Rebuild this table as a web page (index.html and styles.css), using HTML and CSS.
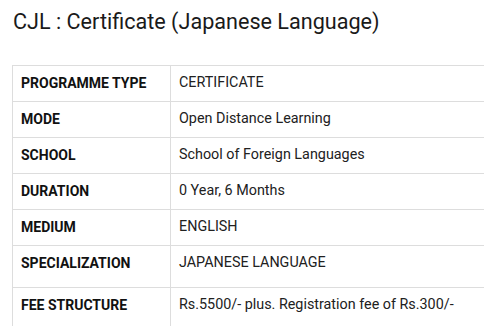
FILE: index.html
```html
<!DOCTYPE html>
<html>
<head>
<meta charset="utf-8">
<link rel="stylesheet" href="styles.css">
</head>
<body>
<div class="page">
  <h1 class="title">CJL : Certificate (Japanese Language)</h1>
  <div class="table-wrap">
    <table class="info">
      <tr><th>PROGRAMME TYPE</th><td>CERTIFICATE</td></tr>
      <tr><th>MODE</th><td>Open Distance Learning</td></tr>
      <tr><th>SCHOOL</th><td>School of Foreign Languages</td></tr>
      <tr><th>DURATION</th><td>0 Year, 6 Months</td></tr>
      <tr><th>MEDIUM</th><td>ENGLISH</td></tr>
      <tr class="tall"><th>SPECIALIZATION</th><td>JAPANESE LANGUAGE</td></tr>
      <tr class="last"><th>FEE STRUCTURE</th><td>Rs.5500/- plus. Registration fee of Rs.300/-</td></tr>
    </table>
  </div>
</div>
</body>
</html>
```
FILE: styles.css
```css
html, body {
  margin: 0;
  padding: 0;
  background: #fff;
  overflow: hidden;
}
.page {
  padding: 0 0 0 12px;
  font-family: Roboto, "Liberation Sans", sans-serif;
  color: #212121;
}
.title {
  margin: 0;
  padding: 7px 0 0 1px;
  font-size: 21.6px;
  font-weight: 400;
  line-height: 29px;
  color: #1a1a1a;
}
.table-wrap {
  margin-top: 29px;
  width: 472px;
  overflow: hidden;
}
.info {
  border-collapse: collapse;
  width: 480px;
  font-size: 14px;
  line-height: 20px;
}
.info th, .info td {
  border: 1px solid #ddd;
  padding: 7px 8px 8px;
  text-align: left;
  vertical-align: top;
}
.info th {
  width: 141px;
  font-weight: 700;
  color: #111;
}
.info td {
  font-weight: 400;
  font-size: 14.35px;
}
.info tr.tall th, .info tr.tall td {
  padding-bottom: 14px;
}
.info tr.last th, .info tr.last td {
  padding-bottom: 20px;
}
```
